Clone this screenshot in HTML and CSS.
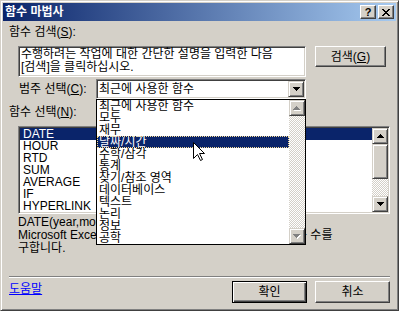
FILE: index.html
```html
<!DOCTYPE html>
<html lang="ko">
<head>
    <meta charset="UTF-8">
    <meta name="viewport" content="width=device-width, initial-scale=1.0">
    <title>함수 마법사</title>
    <link rel="stylesheet" href="styles.css">
</head>
<body>
<div class="window">
    <!--제목 표시줄-->
    <div class="titlebar">
        <span class="title">함수 마법사</span>
        <span class="cap-btn cap-help">?</span>
        <span class="cap-btn cap-close">
            <svg width="8" height="7" shape-rendering="crispEdges"><path d="M0 0h2v1H0zM6 0h2v1H6zM1 1h2v1H1zM5 1h2v1H5zM2 2h4v1H2zM3 3h2v1H3zM2 4h4v1H2zM1 5h2v1H1zM5 5h2v1H5zM0 6h2v1H0zM6 6h2v1H6z" fill="#000"/></svg>
        </span>
    </div>

    <div class="content">
        <!--함수 검색-->
        <div class="label top-label">함수 검색(<u>S</u>):</div>
        <div class="search-row">
            <div class="field search-box">수행하려는 작업에 대한 간단한 설명을 입력한 다음<br>[검색]을 클릭하십시오.</div>
            <div class="button search-btn">검색(<u>G</u>)</div>
        </div>

        <!--범주 선택-->
        <div class="category-row">
            <div class="label cat-label">범주 선택(<u>C</u>):</div>
            <div class="field combo">
                <span class="combo-text">최근에 사용한 함수</span>
                <span class="arrow-btn">
                    <svg width="7" height="4" shape-rendering="crispEdges"><path d="M0 0h7v1H0zM1 1h5v1H1zM2 2h3v1H2zM3 3h1v1H3z" fill="#000"/></svg>
                </span>
            </div>
        </div>

        <!--함수 선택-->
        <div class="label fn-label">함수 선택(<u>N</u>):</div>
        <div class="field fn-list">
            <ul class="fn-items">
                <li class="fn-item selected">DATE</li>
                <li class="fn-item">HOUR</li>
                <li class="fn-item">RTD</li>
                <li class="fn-item">SUM</li>
                <li class="fn-item">AVERAGE</li>
                <li class="fn-item">IF</li>
                <li class="fn-item">HYPERLINK</li>
            </ul>
            <div class="scrollbar">
                <span class="arrow-btn">
                    <svg width="7" height="4" shape-rendering="crispEdges"><path d="M3 0h1v1H3zM2 1h3v1H2zM1 2h5v1H1zM0 3h7v1H0z" fill="#000"/></svg>
                </span>
                <span class="thumb"></span>
                <span class="track"></span>
                <span class="arrow-btn">
                    <svg width="7" height="4" shape-rendering="crispEdges"><path d="M0 0h7v1H0zM1 1h5v1H1zM2 2h3v1H2zM3 3h1v1H3z" fill="#000"/></svg>
                </span>
            </div>
        </div>

        <!--함수 설명-->
        <div class="desc">
            <div>DATE(year,month,day)</div>
            <div>Microsoft Excel 날짜/시간 코드에서 특정 날짜를 나타내는 수를</div>
            <div>구합니다.</div>
        </div>

        <div class="separator"></div>

        <div class="bottom-row">
            <a class="help-link" href="#">도움말</a>
            <div class="button default-btn">확인</div>
            <div class="button">취소</div>
        </div>
    </div>

    <!--펼쳐진 범주 목록-->
    <div class="dropdown">
        <ul class="dd-items">
            <li class="dd-item">최근에 사용한 함수</li>
            <li class="dd-item">모두</li>
            <li class="dd-item">재무</li>
            <li class="dd-item selected">날짜/시간</li>
            <li class="dd-item">수학/삼각</li>
            <li class="dd-item">통계</li>
            <li class="dd-item">찾기/참조 영역</li>
            <li class="dd-item">데이터베이스</li>
            <li class="dd-item">텍스트</li>
            <li class="dd-item">논리</li>
            <li class="dd-item">정보</li>
            <li class="dd-item">공학</li>
        </ul>
        <div class="scrollbar">
            <span class="arrow-btn">
                <svg width="8" height="5" shape-rendering="crispEdges"><path d="M4 1h1v1H4zM3 2h3v1H3zM2 3h5v1H2zM1 4h7v1H1z" fill="#fff"/><path d="M3 0h1v1H3zM2 1h3v1H2zM1 2h5v1H1zM0 3h7v1H0z" fill="#808080"/></svg>
            </span>
            <span class="track"></span>
            <span class="arrow-btn">
                <svg width="8" height="5" shape-rendering="crispEdges"><path d="M1 1h7v1H1zM2 2h5v1H2zM3 3h3v1H3zM4 4h1v1H4z" fill="#fff"/><path d="M0 0h7v1H0zM1 1h5v1H1zM2 2h3v1H2zM3 3h1v1H3z" fill="#808080"/></svg>
            </span>
        </div>
    </div>

    <!--마우스 포인터-->
    <svg class="cursor" width="13" height="20" shape-rendering="crispEdges">
        <path d="M0.5 0.5L0.5 16.5L4.5 12.5L7.5 18.5L9.5 17.5L6.5 11.5L11.5 11.5Z" fill="#fff" stroke="#000" stroke-width="1" shape-rendering="auto"/>
    </svg>
</div>
</body>
</html>
```

FILE: styles.css
```css
* {
    box-sizing: border-box;
}

html, body {
    margin: 0;
    padding: 0;
}

body {
    width: 399px;
    height: 311px;
    overflow: hidden;
    background: #d4d0c8;
    font-family: "Liberation Sans", "Noto Sans CJK KR", sans-serif;
    font-size: 12px;
    color: #000;
}

ul {
    margin: 0;
    padding: 0;
    list-style: none;
}

.window {
    position: relative;
    width: 399px;
    height: 311px;
    border: 1px solid;
    border-color: #d4d0c8 #404040 #404040 #d4d0c8;
    box-shadow: inset 1px 1px #fff, inset -1px -1px #808080;
    padding: 2px;
}

/* 제목 표시줄 */
.titlebar {
    height: 18px;
    display: flex;
    align-items: center;
    padding: 0 2px;
    background: linear-gradient(to right, #0a246a, #a6caf0);
}

.title {
    flex: 1;
    color: #fff;
    font-weight: bold;
    line-height: 12px;
}

.cap-btn {
    width: 16px;
    height: 14px;
    display: flex;
    align-items: center;
    justify-content: center;
    background: #d4d0c8;
    border: 1px solid;
    border-color: #fff #404040 #404040 #fff;
    box-shadow: inset -1px -1px #808080;
}

.cap-help {
    margin-right: 2px;
    font-weight: bold;
    font-size: 11px;
    line-height: 11px;
}

/* 공통 */
.label {
    line-height: 12px;
    white-space: nowrap;
}

.field {
    background: #fff;
    border: 1px solid;
    border-color: #808080 #fff #fff #808080;
    box-shadow: inset 1px 1px #404040, inset -1px -1px #d4d0c8;
}

.button {
    width: 75px;
    height: 22px;
    display: flex;
    align-items: center;
    justify-content: center;
    line-height: 12px;
    background: #d4d0c8;
    border: 1px solid;
    border-color: #fff #404040 #404040 #fff;
    box-shadow: inset -1px -1px #808080;
}

.arrow-btn {
    width: 16px;
    height: 16px;
    flex: none;
    display: flex;
    align-items: center;
    justify-content: center;
    background: #d4d0c8;
    border: 1px solid;
    border-color: #d4d0c8 #404040 #404040 #d4d0c8;
    box-shadow: inset 1px 1px #fff, inset -1px -1px #808080;
}

/* 함수 검색 */
.top-label {
    margin: 5px 0 0 6px;
}

.search-row {
    display: flex;
    align-items: flex-start;
    margin: 8px 0 0 15px;
}

.search-box {
    width: 288px;
    height: 31px;
    padding: 1px 2px;
    line-height: 13px;
    white-space: nowrap;
}

.search-btn {
    width: 71px;
    height: 21px;
    margin-left: 9px;
}

/* 범주 선택 */
.category-row {
    display: flex;
    align-items: center;
    height: 20px;
    margin: 2px 0 0 16px;
}

.cat-label {
    width: 77px;
}

.combo {
    width: 210px;
    height: 20px;
    padding: 1px;
    display: flex;
    align-items: center;
}

.combo-text {
    flex: 1;
    padding-left: 1px;
    line-height: 16px;
}

/* 함수 선택 */
.fn-label {
    margin: 7px 0 0 6px;
}

.fn-list {
    display: flex;
    width: 372px;
    height: 88px;
    margin: 8px 0 0 15px;
    padding: 1px;
}

.fn-items {
    flex: 1;
}

.fn-item {
    height: 12px;
    line-height: 12px;
    padding-left: 3px;
}

.fn-item.selected {
    background: #0a246a;
    color: #fff;
}

.scrollbar {
    width: 16px;
    display: flex;
    flex-direction: column;
}

.thumb {
    height: 35px;
    background: #d4d0c8;
    border: 1px solid;
    border-color: #d4d0c8 #404040 #404040 #d4d0c8;
    box-shadow: inset 1px 1px #fff, inset -1px -1px #808080;
}

.track {
    flex: 1;
    background: repeating-conic-gradient(#fff 0 25%, #d4d0c8 0 50%) 0 0 / 2px 2px;
}

/* 설명 */
.desc {
    margin: 2px 0 0 15px;
    line-height: 13px;
    white-space: nowrap;
}

.separator {
    width: 381px;
    height: 2px;
    margin: 21px 0 0 6px;
    border-top: 1px solid #808080;
    border-bottom: 1px solid #fff;
}

.bottom-row {
    display: flex;
    align-items: flex-start;
    gap: 8px;
    margin-top: 3px;
    padding: 0 6px;
}

.help-link {
    flex: 1;
    margin-top: 2px;
    line-height: 12px;
    color: #0000ff;
}

.default-btn {
    border: 1px solid #000;
    box-shadow: inset 1px 1px #fff, inset -1px -1px #404040, inset -2px -2px #808080;
}

/* 펼쳐진 범주 목록 */
.dropdown {
    position: absolute;
    left: 95px;
    top: 98px;
    width: 210px;
    height: 146px;
    display: flex;
    background: #fff;
    border: 1px solid #000;
}

.dd-items {
    flex: 1;
}

.dd-item {
    height: 12px;
    line-height: 12px;
    padding-left: 2px;
    white-space: nowrap;
}

.dd-item.selected {
    background: #0a246a;
    color: #fff;
    outline: 1px dotted #f5db95;
    outline-offset: -1px;
}

.cursor {
    position: absolute;
    left: 192px;
    top: 141px;
}
```
